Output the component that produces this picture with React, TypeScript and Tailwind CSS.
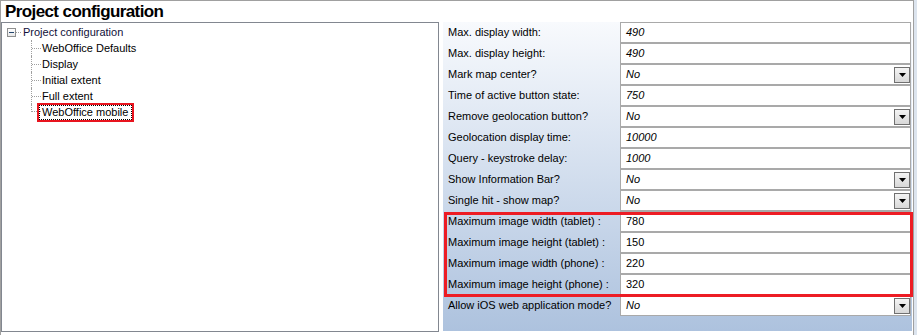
import React from 'react';

type Row = {
  label: string;
  value: string;
  italic?: boolean;
  dropdown?: boolean;
};

const rows: Row[] = [
  { label: 'Max. display width:', value: '490', italic: true },
  { label: 'Max. display height:', value: '490', italic: true },
  { label: 'Mark map center?', value: 'No', italic: true, dropdown: true },
  { label: 'Time of active button state:', value: '750', italic: true },
  { label: 'Remove geolocation button?', value: 'No', italic: true, dropdown: true },
  { label: 'Geolocation display time:', value: '10000', italic: true },
  { label: 'Query - keystroke delay:', value: '1000', italic: true },
  { label: 'Show Information Bar?', value: 'No', italic: true, dropdown: true },
  { label: 'Single hit - show map?', value: 'No', italic: true, dropdown: true },
  { label: 'Maximum image width (tablet) :', value: '780' },
  { label: 'Maximum image height (tablet) :', value: '150' },
  { label: 'Maximum image width (phone) :', value: '220' },
  { label: 'Maximum image height (phone) :', value: '320' },
  { label: 'Allow iOS web application mode?', value: 'No', italic: true, dropdown: true },
];

const children = ['WebOffice Defaults', 'Display', 'Initial extent', 'Full extent', 'WebOffice mobile'];

function DropButton() {
  return (
    <span className="flex h-[16px] w-[16px] items-center justify-center border border-[#707070] bg-gradient-to-b from-[#f4f4f4] to-[#d8d8d8]">
      <svg width="7" height="4" viewBox="0 0 7 4">
        <path d="M0 0H7L3.5 4Z" fill="#000" />
      </svg>
    </span>
  );
}

function PropertyRow({ row }: { row: Row }) {
  return (
    <div className="flex h-[21px]">
      <div className="flex w-[177px] items-center pl-[5px] text-[11px] text-black">{row.label}</div>
      <div className="flex w-[291px] items-center justify-between border border-[#a9a9a9] bg-white pl-[5px] pr-0">
        <span className={`text-[11px] text-black ${row.italic ? 'italic' : ''}`}>{row.value}</span>
        {row.dropdown && <DropButton />}
      </div>
    </div>
  );
}

function Tree() {
  return (
    <div className="pt-[1px] text-[11px] text-black">
      <div className="flex h-[16px] items-center pl-[5px]">
        <span className="flex h-[9px] w-[9px] items-center justify-center border border-[#8e8f8f] bg-gradient-to-b from-white to-[#e6e6e6]">
          <span className="h-[1px] w-[5px] bg-[#24466e]" />
        </span>
        <span className="w-[5px] border-t border-dotted border-[#a0a0a0]" />
        <span className="ml-[2px] text-[#10103a]">Project configuration</span>
      </div>
      {children.map((c, i) => {
        const last = i === children.length - 1;
        return (
          <div key={c} className="flex h-[16px] pl-[29px]">
            <span
              className={`flex w-[10px] border-l border-dotted border-[#a0a0a0] ${last ? 'h-[8px] items-end' : 'h-[16px] items-center'}`}
            >
              <span className="w-full border-t border-dotted border-[#a0a0a0]" />
            </span>
            <span className="relative ml-[1px] flex h-[16px] items-center">
              {c}
              {last && (
                <span className="absolute -bottom-[2px] -left-[5px] -right-[6px] -top-[1px] border-2 border-[#e8141e]">
                  <span className="absolute inset-0 border border-dotted border-black" />
                </span>
              )}
            </span>
          </div>
        );
      })}
    </div>
  );
}

export default function App() {
  return (
    <div className="h-[335px] w-[917px] bg-[#dce4ee]" style={{ fontFamily: '"Liberation Sans", Arial, sans-serif' }}>
      <div className="h-[335px] w-[914px] border-l border-r border-t border-[#a0a0a0] bg-white">
        <div className="h-[21px] pl-[4px] text-[17px] font-bold leading-[21px] tracking-[-0.6px] text-black">
          Project configuration
        </div>
        <div className="flex">
          <div className="h-[310px] w-[438px] border border-[#828790] bg-white">
            <Tree />
          </div>
          <div className="relative ml-[4px] h-[309px] w-[469px] bg-gradient-to-b from-[#f8fafd] to-[#adc2de]">
            {rows.map((r) => (
              <PropertyRow key={r.label} row={r} />
            ))}
            <div className="pointer-events-none absolute left-[1px] top-[190px] h-[85px] w-[469px] border-[3px] border-[#ed1c24]" />
          </div>
        </div>
      </div>
    </div>
  );
}
